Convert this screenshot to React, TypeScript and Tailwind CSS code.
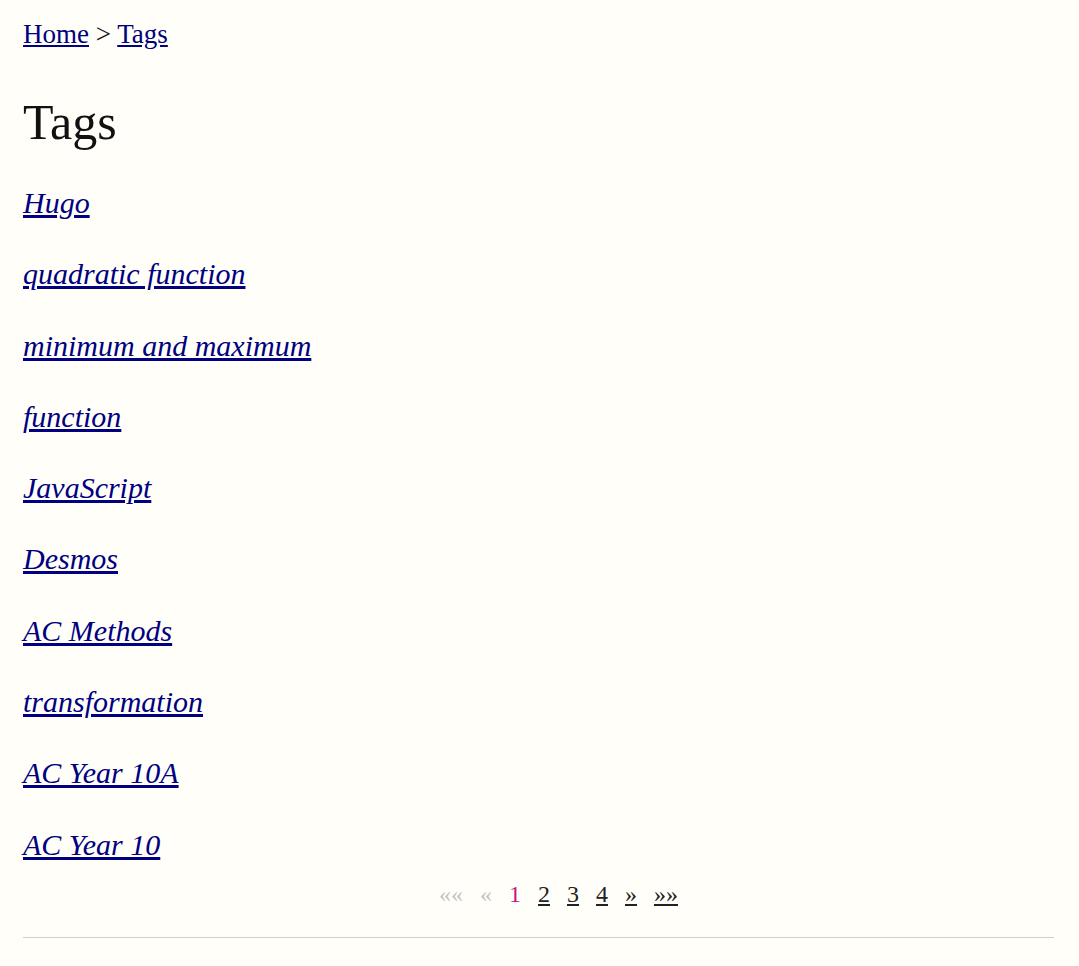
import React from "react";

const tags = [
  "Hugo",
  "quadratic function",
  "minimum and maximum",
  "function",
  "JavaScript",
  "Desmos",
  "AC Methods",
  "transformation",
  "AC Year 10A",
  "AC Year 10",
];

export default function App() {
  return (
    <div className="min-h-[966px] bg-[#fffef8] text-[#111] font-['Liberation_Serif',serif]">
      <div className="pl-[23px] pr-[25px] pt-[16px]">
        {/* Breadcrumb */}
        <nav className="text-[27px] leading-[36px]">
          <a href="#" className="text-[#000080] underline">Home</a>
          <span> &gt; </span>
          <a href="#" className="text-[#000080] underline">Tags</a>
        </nav>

        <h1 className="mt-[42px] text-[50px] leading-[56px] font-normal">Tags</h1>

        {/* Tag list */}
        <ul className="mt-[17px]">
          {tags.map((t) => (
            <li key={t} className="text-[30px] leading-[71.3px] italic">
              <a href="#" className="text-[#000080] underline">{t}</a>
            </li>
          ))}
        </ul>

        {/* Pagination */}
        <ul className="pl-10 flex justify-center gap-[17px] text-[24px] leading-[28px]">
          <li className="text-[#c4c4c4]">««</li>
          <li className="text-[#c4c4c4]">«</li>
          <li className="text-[#c71585]">1</li>
          <li><a href="#" className="text-[#222] underline">2</a></li>
          <li><a href="#" className="text-[#222] underline">3</a></li>
          <li><a href="#" className="text-[#222] underline">4</a></li>
          <li><a href="#" className="text-[#222] underline">»</a></li>
          <li><a href="#" className="text-[#222] underline">»»</a></li>
        </ul>

        <hr className="mt-[29px] border-0 border-t border-[#cfcfcf]" />
      </div>
    </div>
  );
}
